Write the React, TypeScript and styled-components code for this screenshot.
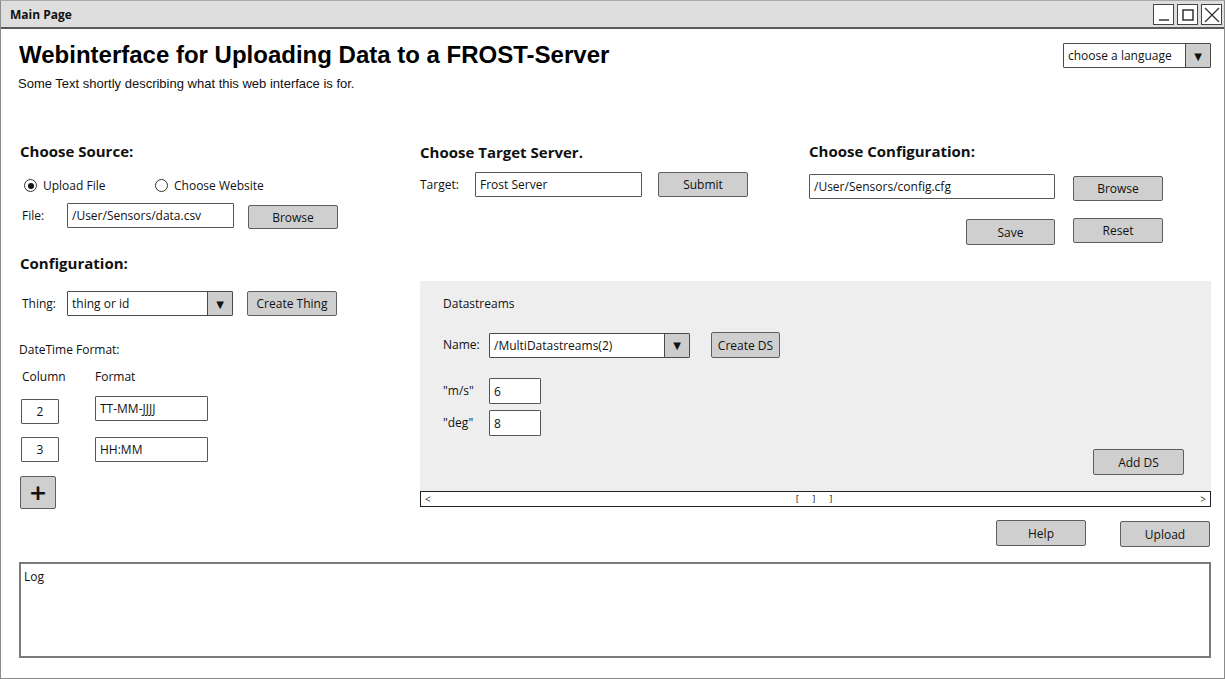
import React from "react";
import styled, { createGlobalStyle } from "styled-components";

const Global = createGlobalStyle`
  html, body { margin: 0; padding: 0; background: #ffffff; }
  body { font-family: "Open Sans", "DejaVu Sans", sans-serif; color: #111; }
  * { box-sizing: border-box; }
`;

const SKETCH = `"Open Sans", "DejaVu Sans", sans-serif`;

const Window = styled.div`
  width: 1225px;
  height: 679px;
  border: 1px solid #8c8c8c;
  border-top-color: #a8a8a8;
  display: flex;
  flex-direction: column;
  background: #fff;
`;

const TitleBar = styled.div`
  height: 28px;
  flex: none;
  background: #dedede;
  border-bottom: 2px solid #5a5a5a;
  display: flex;
  align-items: center;
  justify-content: space-between;
  padding: 0 2px 0 9px;
`;

const TitleText = styled.span`
  font-family: ${SKETCH};
  font-weight: 700;
  font-size: 12px;
  color: #111;
`;

const WinControls = styled.div`
  display: flex;
  gap: 3px;
  margin-top: 1px;
`;

const WinBtn = styled.div`
  width: 21px;
  height: 21px;
  border: 1.5px solid #444;
  background: #fff;
  display: flex;
  align-items: center;
  justify-content: center;
`;

const Content = styled.div`
  flex: 1;
  padding: 11px 13px 0 18px;
  display: flex;
  flex-direction: column;
`;

const Header = styled.div`
  display: flex;
  justify-content: space-between;
  align-items: flex-start;
`;

const H1 = styled.h1`
  margin: 0;
  font-family: "Liberation Sans", Arial, sans-serif;
  font-weight: 700;
  font-size: 24px;
  line-height: 30px;
  color: #000;
`;

const Subtitle = styled.p`
  margin: 6px 0 0 -1px;
  font-family: "Liberation Sans", Arial, sans-serif;
  font-size: 13px;
  line-height: 16px;
  color: #111;
`;

const SelectBox = styled.div<{ $w: number; $top?: number }>`
  width: ${(p) => p.$w}px;
  height: 25px;
  margin-top: ${(p) => p.$top ?? 0}px;
  border: 1.5px solid #4a4a4a;
  border-radius: 1px;
  background: #fff;
  display: flex;
  align-items: stretch;
  font-family: ${SKETCH};
  font-size: 12px;
`;

const SelectValue = styled.span`
  flex: 1;
  display: flex;
  align-items: center;
  padding-left: 4px;
  color: #111;
  white-space: nowrap;
`;

const SelectArrow = styled.span`
  width: 25px;
  flex: none;
  background: #cdcdcd;
  border-left: 1.5px solid #4a4a4a;
  display: flex;
  align-items: center;
  justify-content: center;
  font-size: 10px;
  color: #111;
`;

const Main = styled.div`
  margin-top: 49px;
  display: grid;
  grid-template-columns: 401px 1fr;
`;

const Column = styled.div`
  display: flex;
  flex-direction: column;
  align-items: flex-start;
`;

const SectionTitle = styled.h2<{ $top?: number; $left?: number }>`
  margin: ${(p) => p.$top ?? 0}px 0 0 ${(p) => p.$left ?? 0}px;
  font-family: ${SKETCH};
  font-weight: 700;
  font-size: 15px;
  line-height: 20px;
  color: #111;
`;

const Label = styled.span<{ $w?: number; $pad?: number }>`
  font-family: ${SKETCH};
  font-size: 12px;
  line-height: 16px;
  color: #111;
  white-space: nowrap;
  width: ${(p) => (p.$w ? `${p.$w}px` : "auto")};
  padding-left: ${(p) => p.$pad ?? 0}px;
  flex: none;
`;

const BlockLabel = styled(Label)<{ $top?: number }>`
  display: block;
  margin-top: ${(p) => p.$top ?? 0}px;
`;

const Row = styled.div<{ $top?: number; $gap?: number; $align?: string; $left?: number }>`
  display: flex;
  align-items: ${(p) => p.$align ?? "center"};
  margin-top: ${(p) => p.$top ?? 0}px;
  padding-left: ${(p) => p.$left ?? 0}px;
  gap: ${(p) => p.$gap ?? 0}px;
`;

const RadioItem = styled.label<{ $w?: number }>`
  display: flex;
  align-items: center;
  gap: 6px;
  width: ${(p) => (p.$w ? `${p.$w}px` : "auto")};
  font-family: ${SKETCH};
  font-size: 12px;
  color: #111;
`;

const RadioCircle = styled.span<{ $on?: boolean }>`
  width: 13px;
  height: 13px;
  border-radius: 50%;
  border: 1.5px solid #333;
  background: #fff;
  display: flex;
  align-items: center;
  justify-content: center;
  &::after {
    content: "";
    width: 6px;
    height: 6px;
    border-radius: 50%;
    background: ${(p) => (p.$on ? "#111" : "transparent")};
  }
`;

const TextInput = styled.input<{ $w: number; $h?: number; $center?: boolean; $top?: number; $left?: number }>`
  width: ${(p) => p.$w}px;
  height: ${(p) => p.$h ?? 25}px;
  margin-top: ${(p) => p.$top ?? 0}px;
  margin-left: ${(p) => p.$left ?? 0}px;
  border: 1.5px solid #555;
  border-radius: 1px;
  background: #fff;
  padding: 0 4px;
  font-family: ${SKETCH};
  font-size: 12px;
  color: #111;
  text-align: ${(p) => (p.$center ? "center" : "left")};
  outline: none;
  flex: none;
`;

const Button = styled.button<{ $w: number; $h?: number; $top?: number; $left?: number }>`
  width: ${(p) => p.$w}px;
  height: ${(p) => p.$h ?? 25}px;
  margin-top: ${(p) => p.$top ?? 0}px;
  margin-left: ${(p) => p.$left ?? 0}px;
  background: #cfcfcf;
  border: 1.5px solid #5e5e5e;
  border-radius: 2px;
  font-family: ${SKETCH};
  font-size: 12px;
  color: #111;
  padding: 0;
  flex: none;
  cursor: pointer;
`;

const PlusButton = styled(Button)`
  font-size: 22px;
  font-weight: 700;
  line-height: 1;
  font-family: "DejaVu Sans", sans-serif;
`;

const SaveButton = styled(Button)`
  justify-self: end;
`;

const RightArea = styled.div`
  display: flex;
  flex-direction: column;
`;

const TopSections = styled.div`
  display: grid;
  grid-template-columns: 389px 1fr;
`;

const ConfigGrid = styled.div`
  margin-top: 13px;
  display: grid;
  grid-template-columns: 246px 90px;
  column-gap: 18px;
  row-gap: 17px;
  align-items: start;
`;

const Panel = styled.div`
  margin-top: 36px;
  background: #eeeeee;
  padding: 15px 27px 17px 23px;
  display: flex;
  flex-direction: column;
  align-items: flex-start;
`;

const AddRow = styled.div`
  align-self: stretch;
  display: flex;
  justify-content: flex-end;
  margin-top: 13px;
`;

const Scrollbar = styled.div`
  height: 16px;
  margin-top: -1px;
  border: 1.5px solid #222;
  background: #fff;
  display: flex;
  align-items: center;
  justify-content: space-between;
  padding: 0 4px;
  font-family: ${SKETCH};
  font-size: 10px;
  color: #333;
  line-height: 1;
`;

const Thumb = styled.span`
  letter-spacing: 3px;
  font-size: 9px;
  color: #333;
  font-family: "DejaVu Sans Mono", monospace;
`;

const Actions = styled.div`
  margin-top: 13px;
  display: flex;
  justify-content: flex-end;
  gap: 34px;
  padding-right: 1px;
`;

const Log = styled.div`
  margin-top: 15px;
  height: 96px;
  border: 2px solid #7a7a7a;
  padding: 4px 3px;
  font-family: ${SKETCH};
  font-size: 12px;
  color: #111;
`;

function Select({ value, w, top }: { value: string; w: number; top?: number }) {
  return (
    <SelectBox $w={w} $top={top}>
      <SelectValue>{value}</SelectValue>
      <SelectArrow>▼</SelectArrow>
    </SelectBox>
  );
}

export default function App() {
  return (
    <>
      <Global />
      <Window>
        <TitleBar>
          <TitleText>Main Page</TitleText>
          <WinControls>
            <WinBtn>
              <svg width="14" height="14" viewBox="0 0 14 14">
                <line x1="2" y1="12" x2="12" y2="12" stroke="#333" strokeWidth="1.5" />
              </svg>
            </WinBtn>
            <WinBtn>
              <svg width="14" height="14" viewBox="0 0 14 14">
                <rect x="2" y="2" width="10" height="10" fill="none" stroke="#333" strokeWidth="1.5" />
              </svg>
            </WinBtn>
            <WinBtn>
              <svg width="16" height="16" viewBox="0 0 16 16">
                <line x1="1" y1="1" x2="15" y2="15" stroke="#333" strokeWidth="1.2" />
                <line x1="15" y1="1" x2="1" y2="15" stroke="#333" strokeWidth="1.2" />
              </svg>
            </WinBtn>
          </WinControls>
        </TitleBar>
        <Content>
          <Header>
            <div>
              <H1>Webinterface for Uploading Data to a FROST-Server</H1>
              <Subtitle>Some Text shortly describing what this web interface is for.</Subtitle>
            </div>
            <Select value="choose a language" w={148} top={3} />
          </Header>

          <Main>
            <Column>
              <SectionTitle $left={1}>Choose Source:</SectionTitle>
              <Row $top={16} $left={5}>
                <RadioItem $w={131}>
                  <RadioCircle $on />
                  Upload File
                </RadioItem>
                <RadioItem>
                  <RadioCircle />
                  Choose Website
                </RadioItem>
              </Row>
              <Row $top={8}>
                <Label $w={48} $pad={3}>File:</Label>
                <TextInput $w={167} readOnly defaultValue="/User/Sensors/data.csv" />
                <Button $w={90} $h={24} $top={3} $left={14}>Browse</Button>
              </Row>

              <SectionTitle $top={24} $left={1}>Configuration:</SectionTitle>
              <Row $top={18}>
                <Label $w={48} $pad={3}>Thing:</Label>
                <Select value="thing or id" w={166} />
                <Button $w={90} $left={14}>Create Thing</Button>
              </Row>

              <BlockLabel $top={26}>DateTime Format:</BlockLabel>
              <Row $top={11}>
                <Label $w={76} $pad={3}>Column</Label>
                <Label>Format</Label>
              </Row>
              <Row $top={11} $align="flex-start" $gap={36}>
                <TextInput $w={38} $top={3} $left={2} $center readOnly defaultValue="2" />
                <TextInput $w={113} readOnly defaultValue="TT-MM-JJJJ" />
              </Row>
              <Row $top={13} $gap={36}>
                <TextInput $w={38} $left={2} $center readOnly defaultValue="3" />
                <TextInput $w={113} readOnly defaultValue="HH:MM" />
              </Row>
              <PlusButton $w={36} $h={33} $top={14} $left={1}>+</PlusButton>
            </Column>

            <RightArea>
              <TopSections>
                <Column>
                  <SectionTitle $top={1}>Choose Target Server.</SectionTitle>
                  <Row $top={10}>
                    <Label $w={55}>Target:</Label>
                    <TextInput $w={167} readOnly defaultValue="Frost Server" />
                    <Button $w={90} $left={16}>Submit</Button>
                  </Row>
                </Column>
                <Column>
                  <SectionTitle>Choose Configuration:</SectionTitle>
                  <ConfigGrid>
                    <TextInput $w={246} readOnly defaultValue="/User/Sensors/config.cfg" />
                    <Button $w={90} $top={2}>Browse</Button>
                    <SaveButton $w={89} $h={26} $top={1}>Save</SaveButton>
                    <Button $w={90}>Reset</Button>
                  </ConfigGrid>
                </Column>
              </TopSections>

              <Panel>
                <Label>Datastreams</Label>
                <Row $top={20}>
                  <Label $w={46}>Name:</Label>
                  <Select value="/MultiDatastreams(2)" w={201} />
                  <Button $w={69} $h={26} $left={21}>Create DS</Button>
                </Row>
                <Row $top={20}>
                  <Label $w={46}>"m/s"</Label>
                  <TextInput $w={52} $h={26} readOnly defaultValue="6" />
                </Row>
                <Row $top={6}>
                  <Label $w={46}>"deg"</Label>
                  <TextInput $w={52} $h={26} readOnly defaultValue="8" />
                </Row>
                <AddRow>
                  <Button $w={91} $h={26}>Add DS</Button>
                </AddRow>
              </Panel>
              <Scrollbar>
                <span>&lt;</span>
                <Thumb>[ ] ]</Thumb>
                <span>&gt;</span>
              </Scrollbar>

              <Actions>
                <Button $w={90} $h={26}>Help</Button>
                <Button $w={90} $h={26} $top={1}>Upload</Button>
              </Actions>
            </RightArea>
          </Main>

          <Log>Log</Log>
        </Content>
      </Window>
    </>
  );
}
